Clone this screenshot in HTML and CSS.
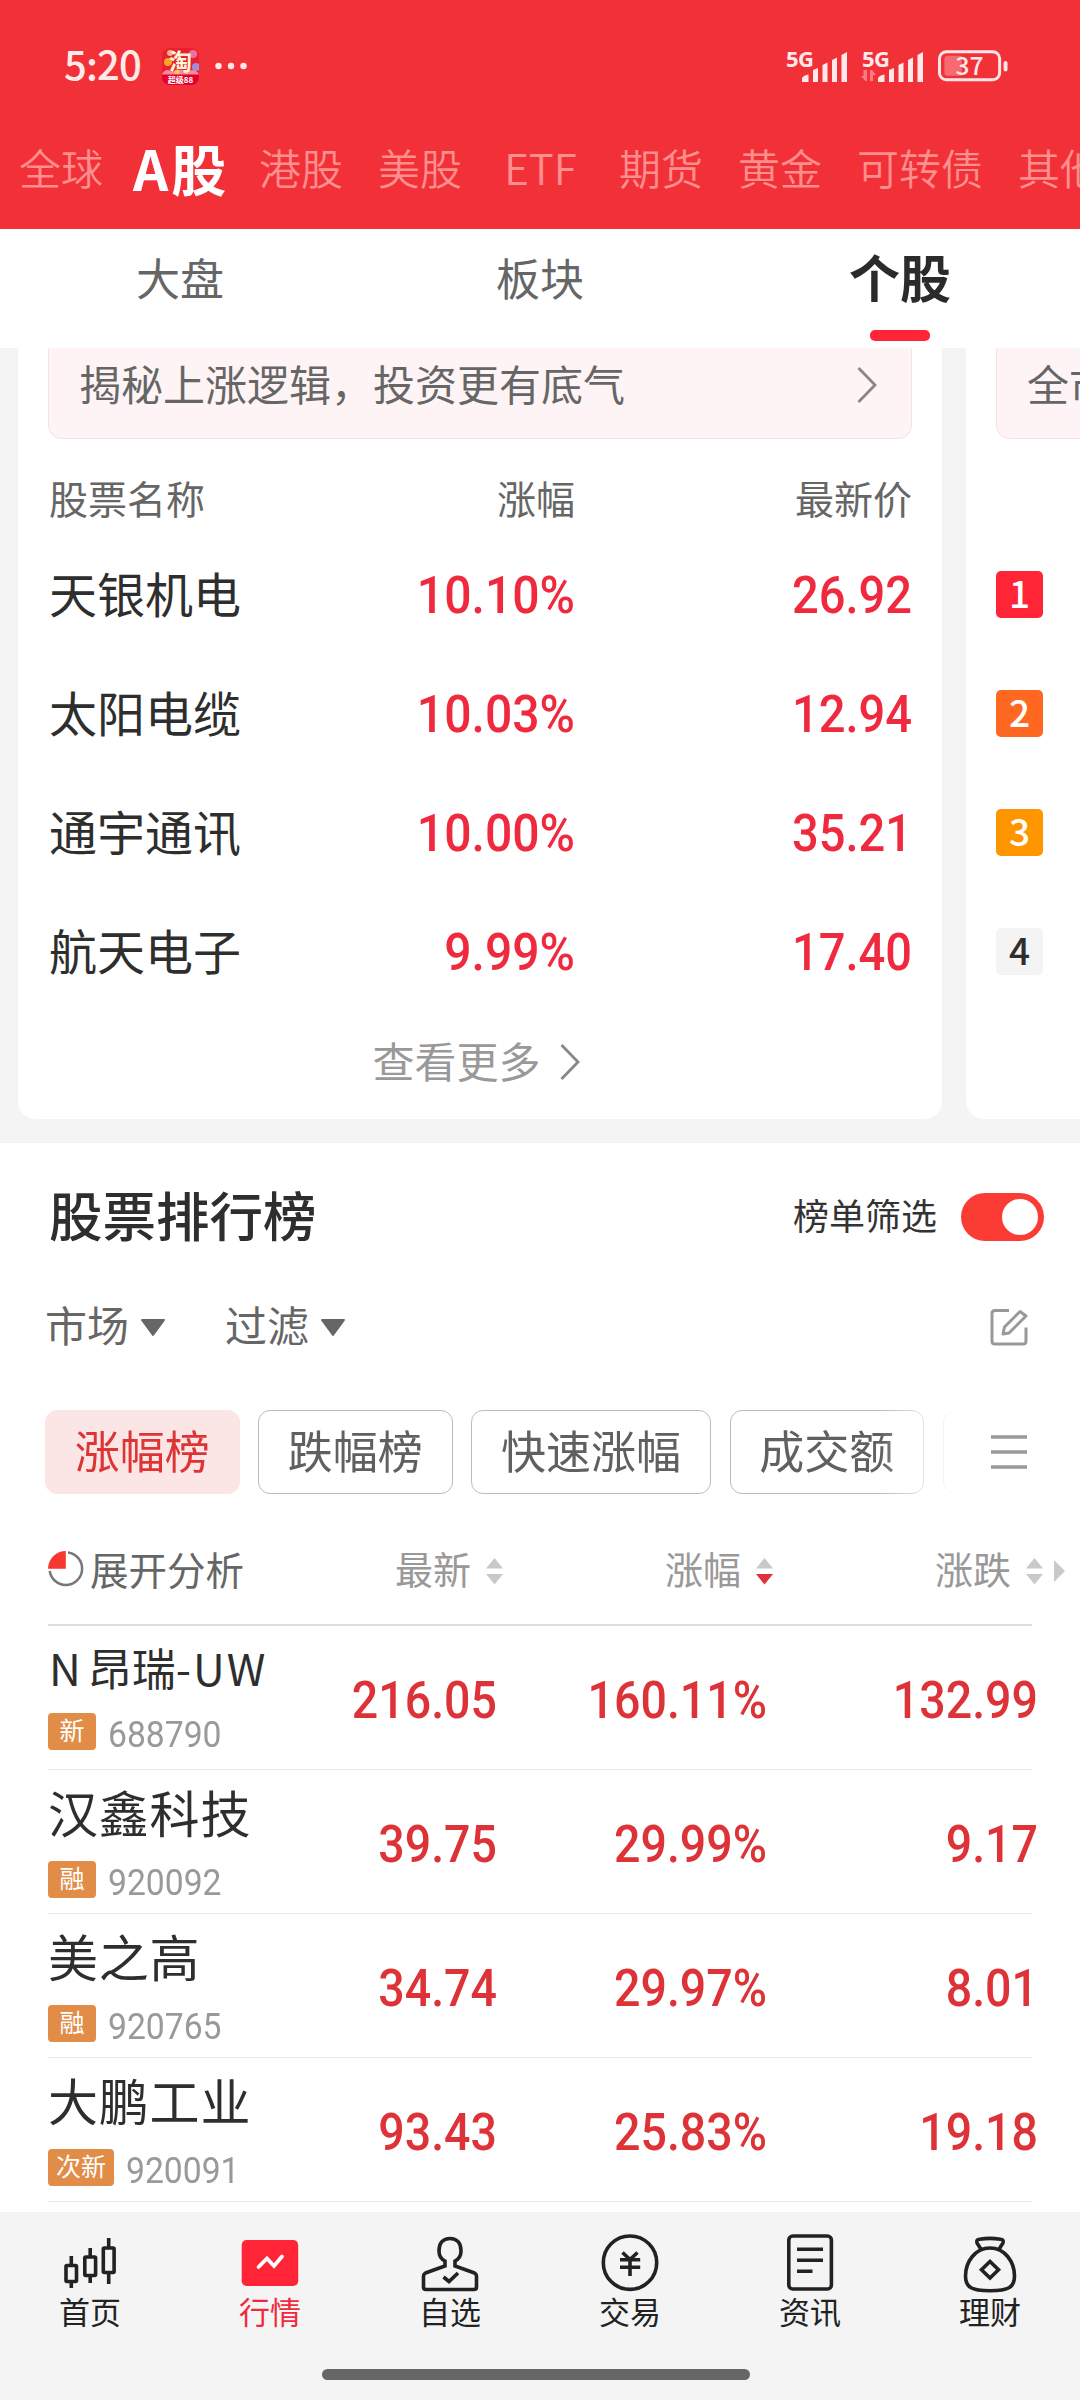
FILE: index.html
```html
<!DOCTYPE html>
<html lang="zh-CN">
<head>
<meta charset="utf-8">
<title>行情</title>
<link rel="stylesheet" href="styles.css">
</head>
<body>
<div class="app">
  <header class="header">
    <div class="status">
      <span class="clock">5:20</span>
      <svg class="taobao" viewBox="0 0 37 37">
        <defs><clipPath id="tb"><rect width="37" height="37" rx="8"/></clipPath></defs>
        <g clip-path="url(#tb)">
          <rect width="37" height="37" fill="#e8202f"/>
          <circle cx="6" cy="14" r="4" fill="#f5a623"/><circle cx="8" cy="5" r="3" fill="#f7b08a"/>
          <circle cx="31" cy="6" r="4" fill="#ee6fa0"/><circle cx="34" cy="19" r="4" fill="#9a8fd8"/>
          <path d="M0 26Q4 19 10 24Q18 19 25 24Q32 19 37 26V30H0Z" fill="#f48a9c"/>
          <circle cx="15" cy="24" r="2.500" fill="#f9c45a"/><circle cx="24" cy="24" r="2" fill="#f9c45a"/>
          <rect y="26.500" width="37" height="11" fill="#e3002b"/>
          <text x="18.500" y="21.500" class="tb-main">淘</text>
          <text x="18.500" y="35" class="tb-sub">超级88</text>
        </g>
      </svg>
      <svg class="dots" viewBox="0 0 32 8"><circle cx="3.500" cy="4" r="3.200"/><circle cx="16" cy="4" r="3.200"/><circle cx="28.500" cy="4" r="3.200"/></svg>
      <div class="signals">
        <div class="signal">
          <span class="net">5G</span>
          <svg viewBox="0 0 62 34"><path d="M16 33V29Q18 26 22.500 25.500V33ZM27 33V21L32 19V33ZM36.500 33V16L41.500 13.500V33ZM46 33V11L51 8.500V33ZM55.500 33V6L61 3V33Z"/></svg>
        </div>
        <div class="signal">
          <span class="net">5G</span>
          <svg viewBox="0 0 62 34"><path class="dim" d="M3.500 21V32L-1 27H1.500V21ZM5 21V32H3.500V21ZM8 32V21H10L14 26H11V32Z"/><path d="M16 33V29Q18 26 22.500 25.500V33ZM27 33V21L32 19V33ZM36.500 33V16L41.500 13.500V33ZM46 33V11L51 8.500V33ZM55.500 33V6L61 3V33Z"/></svg>
        </div>
        <svg class="battery" viewBox="0 0 72 32">
          <rect x="1.500" y="1.500" width="61" height="28.500" rx="7" fill="none" stroke="#ffe6e6" stroke-width="3"/>
          <path d="M10 5.500H24V26H10Q6.500 26 6.500 22V9Q6.500 5.500 10 5.500Z" fill="#f66b71"/>
          <rect x="66.500" y="11" width="4" height="10.500" rx="2" fill="#ffe6e6"/>
          <text x="32" y="25" class="battery-level">37</text>
        </svg>
      </div>
    </div>
    <nav class="markets">
      <span>全球</span><span class="current">A股</span><span>港股</span><span>美股</span><span class="etf">ETF</span><span>期货</span><span>黄金</span><span>可转债</span><span>其他</span>
    </nav>
  </header>

  <nav class="subtabs">
    <span>大盘</span><span>板块</span><span class="current">个股</span>
  </nav>

  <section class="cards">
    <article class="card">
      <div class="banner"><span>揭秘上涨逻辑，投资更有底气</span><svg class="chevron" viewBox="0 0 20 36"><path d="M1.500 1L18 18L1.500 35"/></svg></div>
      <div class="pick pick-head"><span>股票名称</span><span>涨幅</span><span>最新价</span></div>
      <div class="pick"><span>天银机电</span><b>10.10%</b><b>26.92</b></div>
      <div class="pick"><span>太阳电缆</span><b>10.03%</b><b>12.94</b></div>
      <div class="pick"><span>通宇通讯</span><b>10.00%</b><b>35.21</b></div>
      <div class="pick"><span>航天电子</span><b>9.99%</b><b>17.40</b></div>
      <div class="more"><span>查看更多</span><svg class="chevron" viewBox="0 0 20 36"><path d="M1.500 1L18 18L1.500 35"/></svg></div>
    </article>
    <article class="card">
      <div class="banner"><span>全市</span></div>
      <div class="ranks">
        <i class="rank first">1</i><i class="rank second">2</i><i class="rank third">3</i><i class="rank">4</i>
      </div>
    </article>
  </section>

  <section class="ranking">
    <div class="title-row">
      <h2>股票排行榜</h2>
      <span class="switch-label">榜单筛选</span>
      <span class="switch"></span>
    </div>
    <div class="filters">
      <span>市场</span><svg class="caret" viewBox="0 0 26 17"><path d="M2 1H24L13 16Z"/></svg>
      <span class="filter-2">过滤</span><svg class="caret" viewBox="0 0 26 17"><path d="M2 1H24L13 16Z"/></svg>
      <svg class="edit" viewBox="0 0 40 40"><path d="M20 3.500H6Q3 3.500 3 6.500V34Q3 37 6 37H34Q37 37 37 34V20.500"/><path d="M31 4.500L37 9L20 26L14 27L15.500 20Z"/></svg>
    </div>
    <div class="chips">
      <div class="chip-list">
        <span class="chip active">涨幅榜</span><span class="chip">跌幅榜</span><span class="chip wide">快速涨幅</span><span class="chip">成交额</span><span class="chip"></span>
      </div>
      <svg class="menu" viewBox="0 0 38 36"><path d="M1 3H37M1 18H37M1 33H37"/></svg>
    </div>

    <div class="table-head">
      <div class="expand">
        <svg class="pie" viewBox="0 0 36 36"><path d="M17.800 0V17.800H0A17.800 17.800 0 0 1 17.800 0Z" fill="#f5392f"/><path d="M20 1.500A16.300 16.300 0 1 1 1.700 20" fill="none" stroke="#777" stroke-width="2.500"/></svg>
        <span>展开分析</span>
      </div>
      <div class="col">最新<svg class="sort" viewBox="0 0 17 27"><path d="M0 10.500L8.500 0L17 10.500Z"/><path d="M0 16L8.500 26.500L17 16Z"/></svg></div>
      <div class="col">涨幅<svg class="sort" viewBox="0 0 17 27"><path d="M0 10.500L8.500 0L17 10.500Z"/><path class="on" d="M0 16L8.500 26.500L17 16Z"/></svg></div>
      <div class="col">涨跌<svg class="sort" viewBox="0 0 17 27"><path d="M0 10.500L8.500 0L17 10.500Z"/><path d="M0 16L8.500 26.500L17 16Z"/></svg><svg class="next" viewBox="0 0 11 22"><path d="M0 0L11 11L0 22Z"/></svg></div>
    </div>
    <div class="row latin"><div><div class="name"><span class="prefix">N</span>昂瑞<span class="suffix">-UW</span></div><div class="meta"><em>新</em><span>688790</span></div></div><b>216.05</b><b>160.11%</b><b>132.99</b></div>
    <div class="row"><div><div class="name">汉鑫科技</div><div class="meta"><em>融</em><span>920092</span></div></div><b>39.75</b><b>29.99%</b><b>9.17</b></div>
    <div class="row"><div><div class="name">美之高</div><div class="meta"><em>融</em><span>920765</span></div></div><b>34.74</b><b>29.97%</b><b>8.01</b></div>
    <div class="row"><div><div class="name">大鹏工业</div><div class="meta"><em class="two">次新</em><span>920091</span></div></div><b>93.43</b><b>25.83%</b><b>19.18</b></div>
  </section>

  <footer class="tabbar">
    <div class="tabs">
      <div class="tab"><svg viewBox="0 0 64 64"><rect x="8" y="35.500" width="10.500" height="16" rx="1"/><path d="M13.300 26V35M13.300 52V58"/><rect x="26.800" y="27" width="10.800" height="18.500" rx="1"/><path d="M32.200 18V27M32.200 46V53"/><rect x="45.300" y="18" width="10.800" height="24.500" rx="1"/><path d="M50.700 8V18M50.700 43V54"/></svg><span>首页</span></div>
      <div class="tab on"><svg viewBox="0 0 64 64"><rect x="3.700" y="10" width="56.500" height="46" rx="5" class="solid"/><path class="trend" d="M20.500 37L29 28.500L36 36L44 26.500"/></svg><span>行情</span></div>
      <div class="tab"><svg viewBox="0 0 64 64"><path d="M27 31V36L7.500 43Q5.500 44 5.500 46.500V57Q5.500 59.500 8 59.500H56Q58.500 59.500 58.500 57V46.500Q58.500 44 56.500 43L37 36V31C41 29 43 25 43 21C43 13 39 8.500 32 8.500S21 13 21 21C21 25 23 29 27 31Z"/><path d="M25.500 47L31 51.500L40 43"/></svg><span>自选</span></div>
      <div class="tab"><svg viewBox="0 0 64 64"><circle cx="32" cy="32.700" r="26.700"/><path d="M24.500 22.500L32 29.500L39.500 22.500M22 29.700H42.200M22 37.300H42.200M32 29.500V46"/></svg><span>交易</span></div>
      <div class="tab"><svg viewBox="0 0 64 64"><rect x="10.800" y="6" width="42.600" height="53" rx="4"/><path d="M19 19.300H45M19 30.300H45M19 41.300H34.500"/></svg><span>资讯</span></div>
      <div class="tab"><svg viewBox="0 0 64 64"><path d="M23.500 20L19 13Q18 9.500 21.500 9.300Q32 7.500 42.500 9.300Q46 9.500 45 13L40.500 20"/><path d="M32 18C17 18 7.500 32 7.500 46C7.500 57 13 60.800 32 60.800S56.500 57 56.500 46C56.500 32 47 18 32 18Z"/><path d="M32 31.500L40.500 39.800L32 48L23.500 39.800Z"/></svg><span>理财</span></div>
    </div>
    <div class="home-indicator"></div>
  </footer>
</div>
</body>
</html>
```
FILE: styles.css
```css
* { box-sizing: border-box; }
body {
  margin: 0;
  background: #fff;
  color: #2e2e2e;
  font-family: "Noto Sans CJK SC", sans-serif;
  white-space: nowrap;
}
.app {
  width: 1080px;
  height: 2400px;
  display: flex;
  flex-direction: column;
  overflow: hidden;
}
svg { display: block; flex: none; overflow: visible; }

/* Status bar and market tabs */
.header { flex: none; height: 229px; background: #f23038; overflow: hidden; }
.status { display: flex; align-items: center; height: 132px; padding: 0 71px 0 64px; color: #ffe9e9; }
.clock { width: 98px; padding-bottom: 6px; font-size: 40px; font-weight: 500; line-height: 60px; letter-spacing: -0.8px; }
.taobao { width: 37px; height: 37px; }
.tb-main { font-size: 23px; font-weight: 700; fill: #fff6d8; text-anchor: middle; }
.tb-sub { font-size: 8px; font-weight: 700; fill: #fff; text-anchor: middle; }
.dots { width: 32px; height: 8px; margin-left: 16px; fill: #ffe9e9; }
.signals { display: flex; align-items: center; gap: 14px; margin-left: auto; }
.signal { position: relative; width: 62px; height: 34px; }
.signal svg { width: 62px; height: 34px; fill: #ffe9e9; }
.signal .dim { fill: #f97c80; }
.net {
  position: absolute;
  left: 0;
  top: -2px;
  font: 700 22px/22px "Noto Sans", sans-serif;
  letter-spacing: -0.5px;
}
.battery { width: 71px; height: 32px; }
.battery-level { font: 500 25px "Noto Sans CJK SC", sans-serif; fill: #ffe9e9; text-anchor: middle; }
.markets { display: flex; align-items: center; gap: 35px; height: 70px; padding-left: 19px; color: #ff8e8e; font-size: 42px; font-weight: 350; line-height: 60px; }
.markets span { flex: none; }
.markets .current { display: flex; justify-content: center; width: 86px; color: #fff; font-size: 55px; font-weight: 700; letter-spacing: 3px; }
.markets .etf { width: 87px; text-align: center; }

.subtabs { flex: none; display: flex; height: 119px; font-size: 44px; line-height: 96px; color: #666; text-align: center; background: #fff; }
.subtabs span { width: 360px; }
.subtabs .current { display: flex; flex-direction: column; align-items: center; color: #2b2b2b; font-size: 51px; font-weight: 700; line-height: 95px; }
.subtabs .current::after { content: ""; width: 60px; height: 11px; margin-top: 6px; border-radius: 5px; background: #ff2436; }

/* Horizontally scrolling cards */
.cards { flex: none; display: flex; gap: 24px; height: 795px; padding: 0 0 24px 18px; background: #f4f4f4; overflow: hidden; }
.card { flex: none; width: 924px; padding: 0 30px; border-radius: 0 0 18px 18px; background: #fff; }
.banner {
  display: flex;
  align-items: center;
  justify-content: space-between;
  height: 91px;
  padding: 0 34px 21px 30px;
  border: 1px solid #f6e3e4;
  border-top: 0;
  border-radius: 0 0 14px 14px;
  background: #fef4f5;
  color: #666;
  font-size: 42px;
  line-height: 60px;
}
.chevron { width: 20px; height: 36px; margin-top: 4px; fill: none; stroke: #888; stroke-width: 2.8; }
.pick { display: grid; grid-template-columns: 250px 277px 337px; align-items: center; height: 119px; font-size: 48px; line-height: 70px; }
.pick > :first-child { padding-left: 1px; }
.pick > :not(:first-child) { text-align: right; }
.pick b, .row b { font-family: Roboto, sans-serif; font-size: 52px; font-weight: 500; color: #f02a3e; transform: scaleX(0.905); transform-origin: right; }
.pick b { padding-top: 8px; }
.pick b:nth-child(2) { transform: scaleX(0.925); }
.pick-head { height: 93px; padding-top: 23px; color: #666; font-size: 39px; line-height: 56px; }
.more { display: flex; align-items: center; justify-content: center; gap: 19px; height: 104px; padding-right: 8px; color: #999; font-size: 42px; line-height: 60px; }
.ranks { display: grid; gap: 72px; margin-top: 132px; }
.rank { width: 47px; height: 47px; border-radius: 5px; background: #f4f4f4; color: #2e2e2e; font: 500 37px/43px "Noto Sans CJK SC", sans-serif; text-align: center; }
.rank.first { background: #ff2436; color: #fff; }
.rank.second { background: #ff6820; color: #fff; }
.rank.third { background: #ff9600; color: #fff; }

/* Stock ranking */
.ranking { flex: none; }
.title-row { display: flex; align-items: center; height: 142px; padding: 0 36px 0 49px; }
h2 { margin: 0 auto 0 0; font-size: 53.5px; font-weight: 500; line-height: 80px; }
.switch-label { color: #333; font-size: 36px; line-height: 50px; }
.switch { display: flex; justify-content: flex-end; width: 83px; height: 48px; margin: 6px 0 0 24px; padding: 6px; border-radius: 24px; background: #fb3c35; }
.switch::before { content: ""; width: 36px; height: 36px; border-radius: 50%; background: #fff; }
.filters { display: flex; align-items: center; height: 77px; padding: 0 51px 0 45px; color: #666; font-size: 42px; line-height: 60px; }
.caret { width: 26px; height: 17px; margin: 7px 0 0 11px; fill: #666; stroke: #666; stroke-width: 2; stroke-linejoin: round; }
.filter-2 { margin-left: 59px; }
.edit { width: 40px; height: 40px; margin: 6px 0 0 auto; fill: none; stroke: #999; stroke-width: 3; stroke-linejoin: round; }
.chips { display: flex; align-items: center; height: 84px; margin-top: 48px; padding: 0 52px 0 45px; }
.chip-list {
  display: flex;
  gap: 18.5px;
  width: 915px;
  overflow: hidden;
  -webkit-mask-image: linear-gradient(90deg, #000 835px, transparent 912px);
  mask-image: linear-gradient(90deg, #000 835px, transparent 912px);
}
.chip { flex: none; width: 194.5px; height: 84px; padding-bottom: 5px; border: 1.5px solid #bbb; border-radius: 12px; color: #606060; font-size: 45px; line-height: 77px; text-align: center; }
.chip.wide { width: 240px; }
.chip.active { border-color: #fbe5e5; background: #fbe5e5; color: #dd3436; }
.menu { width: 38px; height: 36px; margin-left: auto; stroke: #999; stroke-width: 3.5; }
.table-head, .row { display: grid; grid-template-columns: 180px 269px 270px 271px; align-items: center; margin: 0 48px; }
.table-head { height: 132px; padding-top: 18px; border-bottom: 2px solid #ddd; font-size: 38px; line-height: 56px; color: #999; }
.expand { display: flex; align-items: center; gap: 6px; color: #666; font-size: 38.5px; }
.pie { width: 36px; height: 36px; margin-top: 1px; }
.col { display: flex; align-items: center; justify-content: flex-end; margin-right: -6px; }
.col:last-child { margin-right: -5px; }
.sort { width: 17px; height: 27px; margin: 6px 0 0 15px; fill: #c9c9c9; }
.sort .on { fill: #e0303a; }
.next { width: 11px; height: 22px; margin: 6px -22px 0 11px; fill: #c9c9c9; }
.row { height: 144px; border-bottom: 1.5px solid #ebebeb; }
.row > div { align-self: start; width: 0; padding-top: 9px; }
.row b { padding-top: 5px; color: #dd3338; text-align: right; transform: scaleX(0.895); }
.name { height: 64px; font-size: 50px; line-height: 64px; letter-spacing: 0.8px; }
.meta { display: flex; height: 37px; margin-top: 18px; color: #999; }
.meta em { flex: none; width: 48px; height: 37px; margin-right: 12px; border-radius: 4px; background: #e18d48; color: #fff; font: 400 25px/33px "Noto Sans CJK SC", sans-serif; text-align: center; }
.meta span { padding-top: 3px; font: 400 37px/37px Roboto, sans-serif; transform: scaleX(0.91); transform-origin: left; }
.meta .two { width: 66px; }
.latin .name { font-size: 44px; letter-spacing: 0; }
.latin .prefix { margin: 0 7px 0 1px; }
.latin .suffix { letter-spacing: 2px; }
.latin .meta { margin-top: 14px; }

/* Bottom navigation */
.tabbar { flex: none; height: 188px; margin-top: auto; padding-top: 18px; background: #f4f4f4; }
.tabs { display: flex; }
.tab { display: flex; flex-direction: column; align-items: center; width: 180px; color: #222; font-size: 31px; line-height: 34px; }
.tab svg { width: 64px; height: 64px; fill: none; stroke: #222; stroke-width: 3.6; }
.tab.on { color: #f02a3e; }
.tab .solid { fill: #ff2436; stroke: none; }
.tab .trend { stroke: #fff; stroke-width: 3.8; stroke-linecap: round; }
.home-indicator { width: 428px; height: 11px; margin: 41px 0 0 322px; border-radius: 6px; background: #666; }
```
